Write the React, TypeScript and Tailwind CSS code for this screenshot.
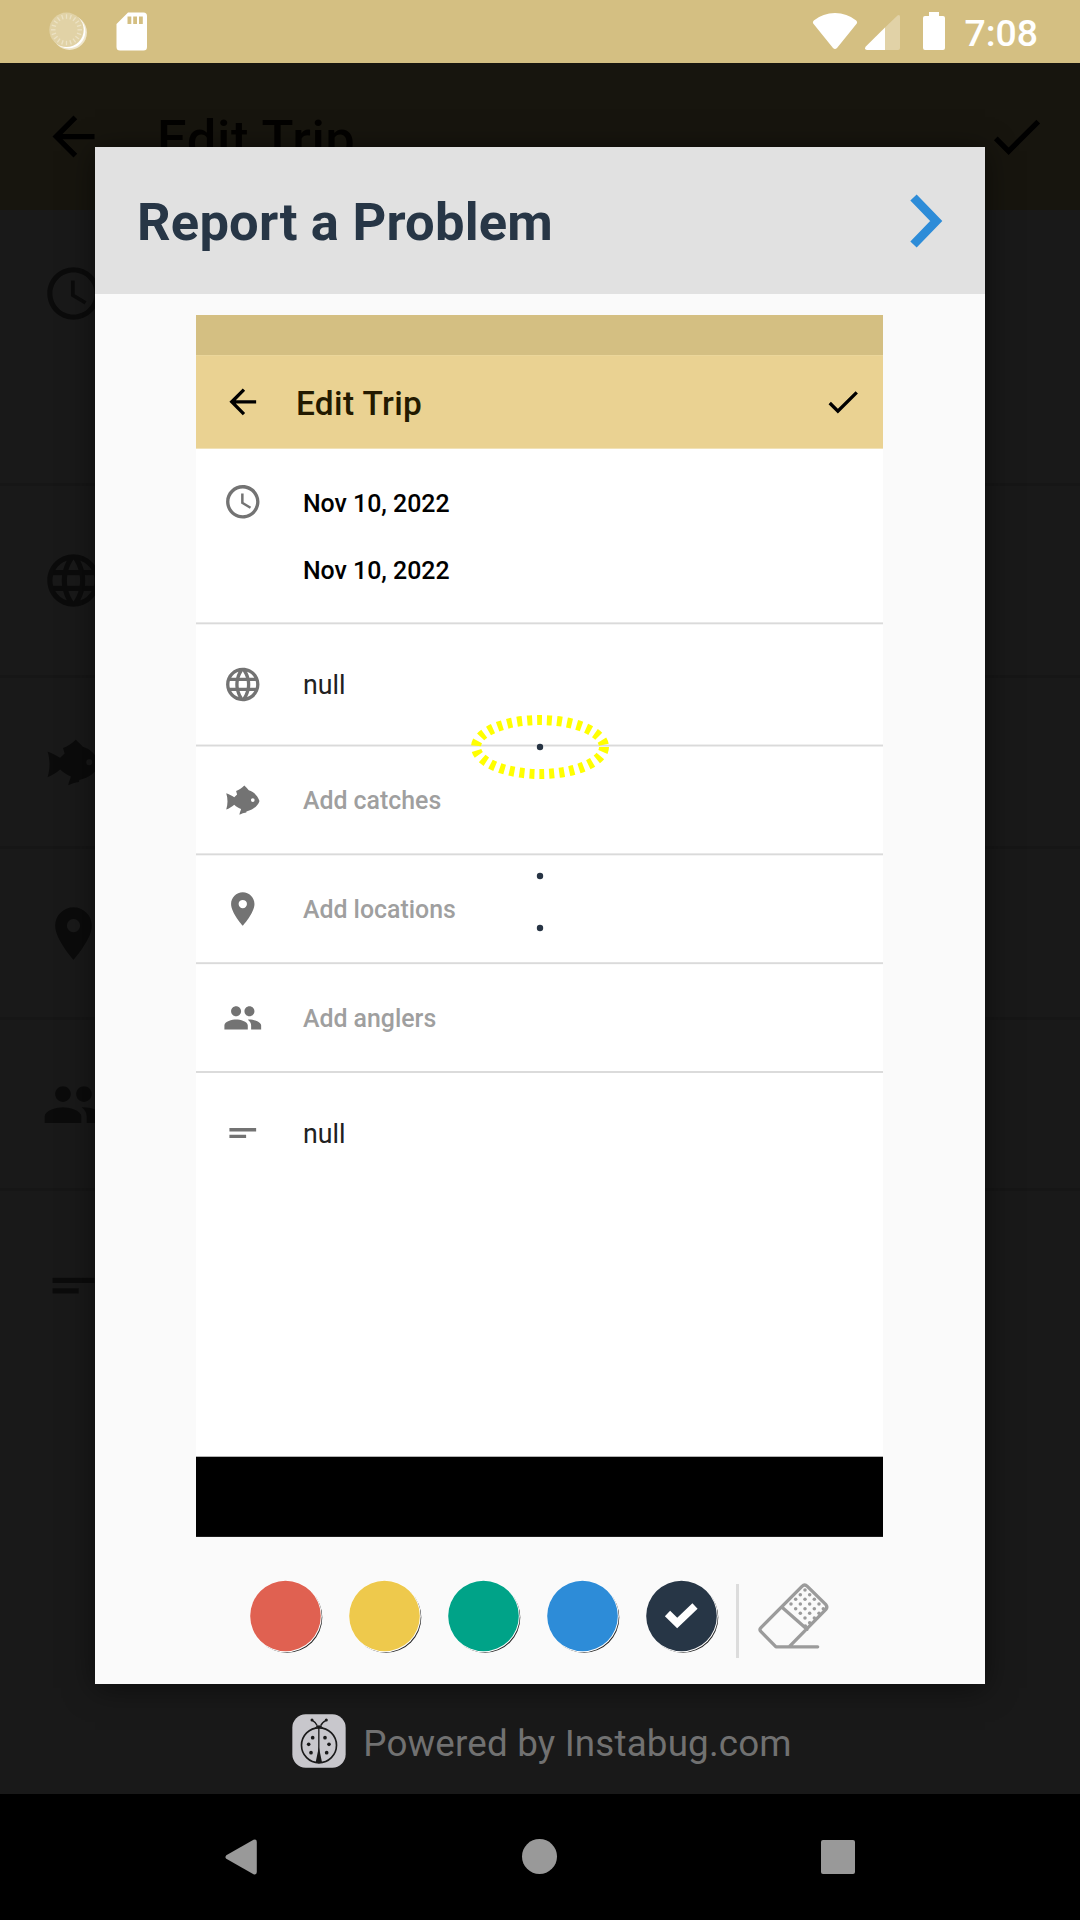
import type { ReactNode } from "react";
import {
  MdAccessTime,
  MdArrowBack,
  MdCheck,
  MdLanguage,
  MdLocationOn,
  MdPeople,
  MdShortText,
} from "react-icons/md";

function FishIcon() {
  return (
    <svg viewBox="0 0 24 24" className="size-[63px]" fill="currentColor">
      <path
        fillRule="evenodd"
        d="M2.1 7.8C3.6 8.3 5.4 9.2 6.9 10.2L8.6 8.6L8 6.5C9.8 5.7 11.5 4.7 12.9 3.2C13.8 4.2 14.8 5 15.6 6C18.4 6.8 20.9 9.2 22 12.5C20.9 15.8 18 17.8 14.2 18.7L14.1 19.4C12.7 19.6 11.3 20 10 20.7C10.1 19.5 10.7 18.4 11 17.3C9.5 16.8 8.2 15.9 6.9 14.7C5.4 16 3.8 17 2.1 17.6C3.1 14.4 3.1 11 2.1 7.8ZM18 10.8A1.1 1.1 0 1 0 18 13A1.1 1.1 0 1 0 18 10.8Z"
      />
    </svg>
  );
}

interface RowProps {
  icon: ReactNode;
  height: string;
  last?: boolean;
  children?: ReactNode;
}

function Row({ icon, height, last, children }: RowProps) {
  return (
    <div className={`flex items-center pl-[42px] ${height} ${last ? "" : "border-b-[3px] border-[#dadada]"}`}>
      <span className="text-[#737373]">{icon}</span>
      <span className="ml-[63px] pt-[3px] whitespace-nowrap">{children}</span>
    </div>
  );
}

function TripScreen({ labels }: { labels: boolean }) {
  return (
    <div className="flex h-[1920px] w-[1080px] flex-col bg-white text-[42px] leading-[48px]">
      <div className="h-[63px] bg-[#d4bf82]" />
      <div className="flex h-[147px] items-center bg-[#ead292] pr-[32px] pl-[42px] text-black">
        <MdArrowBack className="size-[63px]" />
        <span className="ml-[52px] flex-1 pt-[5px] text-[52.5px] leading-[62px] font-medium tracking-[0.6px] text-[#231a00]">
          Edit Trip
        </span>
        <MdCheck className="size-[63px]" />
      </div>
      <div className="flex h-[276px] border-b-[3px] border-[#dadada] pt-[52px] pl-[42px]">
        <MdAccessTime className="size-[63px] text-[#737373]" />
        {labels && (
          <div className="ml-[63px] flex flex-col gap-[57px] pt-[11px] text-[39.1px] font-medium text-black">
            <span>Nov 10, 2022</span>
            <span>Nov 10, 2022</span>
          </div>
        )}
      </div>
      <Row icon={<MdLanguage className="size-[63px]" />} height="h-[192px]">
        {labels && <span className="text-[#212121]">null</span>}
      </Row>
      <Row icon={<FishIcon />} height="h-[171px]">
        {labels && <span className="text-[39.1px] font-medium text-[#9f9f9f]">Add catches</span>}
      </Row>
      <Row icon={<MdLocationOn className="size-[63px]" />} height="h-[171px]">
        {labels && <span className="text-[39.1px] font-medium text-[#9f9f9f]">Add locations</span>}
      </Row>
      <Row icon={<MdPeople className="size-[63px]" />} height="h-[171px]">
        {labels && <span className="text-[39.1px] font-medium text-[#9f9f9f]">Add anglers</span>}
      </Row>
      <Row icon={<MdShortText className="size-[63px]" />} height="h-[189px]" last>
        {labels && <span className="text-[#212121]">null</span>}
      </Row>
      <div className="flex-1" />
      <div className="h-[126px] bg-black" />
    </div>
  );
}

const TICKS = Array.from({ length: 20 }, (_, i) => i * 18);

function StatusBar() {
  return (
    <div className="flex h-[63px] items-start bg-[#d4bf82] text-white">
      <svg className="mt-[10px] ml-[46px] h-[44px] w-[44px]" viewBox="46 10 44 44">
        <circle cx="69.500" cy="32.500" r="17.400" fill="#efe6cc" />
        <circle cx="68.500" cy="31.500" r="16.800" fill="#fff" />
        <circle cx="66.500" cy="29.800" r="17.200" fill="#e1d2a6" />
        {TICKS.map((a) => (
          <path key={a} d="M66.5 14.3V18.8" stroke="#ece2c4" strokeWidth="1.3" transform={`rotate(${a} 66.5 29.8)`} />
        ))}
      </svg>
      <svg className="mt-[12px] ml-[26px] h-[39px] w-[32px]" viewBox="116 12 32 39">
        <path
          fillRule="evenodd"
          fill="currentColor"
          d="M128 12.5H143.5Q147 12.5 147 16V47Q147 50.5 143.5 50.5H120Q116.5 50.5 116.5 47V24ZM127.5 16.5V24H131.3V16.5ZM133.2 16.5V24H137V16.5ZM139 16.5V24H142.8V16.5Z"
        />
      </svg>
      <div className="flex-1" />
      <svg className="mt-[12px] h-[40px] w-[46px]" viewBox="812 12 46 40" fill="currentColor">
        <path d="M813.2 23.5Q812.2 21.8 813.8 20.5Q823 13 835 13T856.2 20.5Q857.8 21.8 856.8 23.5L837 48Q835 50 833 48Z" />
      </svg>
      <svg className="mt-[12px] ml-[6px] h-[40px] w-[38px]" viewBox="864 12 38 40" fill="currentColor">
        <path d="M885 27.5L897.5 15.5Q900 14 900 17V48Q900 50 898 50H885Z" opacity=".3" />
        <path d="M885 27.5V50H867Q863.800 49.500 865.800 46.500Z" />
      </svg>
      <svg className="mt-[12px] ml-[21px] h-[38px] w-[22px]" viewBox="0 0 22 38" fill="currentColor">
        <path d="M6 0H16V4H20Q22 4 22 6V36Q22 38 20 38H2Q0 38 0 36V6Q0 4 2 4H6Z" />
      </svg>
      <span className="mt-[11px] mr-[42px] ml-[19px] text-[37.4px] leading-[44px] font-medium">7:08</span>
    </div>
  );
}

function Swatch({ fill, selected }: { fill: string; selected?: boolean }) {
  return (
    <svg className="mr-[24px] h-[75px] w-[75px]" viewBox="-36.500 -36 75 75">
      <circle cx="1.500" cy="1.500" r="35.300" fill="#222" />
      <circle cx="0.300" cy="0.300" r="36" fill="#fff" />
      <circle r="35.300" fill={fill} />
      {selected && (
        <path d="M-14 -2.500L-4.300 7L13.500 -10" fill="none" stroke="#fff" strokeWidth="7.500" strokeLinejoin="miter" />
      )}
    </svg>
  );
}

const ERASER_DOTS = [
  [825, 88], [811, 102], [839, 102], [797, 116], [825, 116], [853, 116], [783, 130],
  [811, 130], [839, 130], [867, 130], [797, 144], [825, 144], [853, 144], [880, 144],
  [811, 158], [839, 158], [867, 158], [825, 172], [853, 172], [839, 186], [826, 196],
];

function EraserIcon() {
  return (
    <svg className="h-[68px] w-[74px]" viewBox="681 64 222 204" fill="none" stroke="#9b9b9b" strokeWidth="10">
      <path
        strokeLinejoin="round"
        strokeLinecap="round"
        d="M863 258.500H738L693 213Q687 207 693 201L816 77Q824 69 832 77L887 131Q894 139 887 147L778 258M756 140L831 206"
      />
      {ERASER_DOTS.map(([x, y]) => (
        <circle key={`${x}-${y}`} cx={x} cy={y} r="5.300" fill="#9b9b9b" stroke="none" />
      ))}
    </svg>
  );
}

function Annotations() {
  return (
    <svg className="absolute top-[390px] left-[264px] h-[240px] w-[160px]" viewBox="460 705 160 240">
      <ellipse cx="540" cy="747" rx="64" ry="27" fill="none" stroke="#ffff00" strokeWidth="10" strokeDasharray="5 5" />
      <circle cx="540" cy="747" r="3.200" fill="#273444" />
      <circle cx="540" cy="876" r="3.200" fill="#273444" />
      <circle cx="540" cy="928" r="3.200" fill="#273444" />
    </svg>
  );
}

function LadybugLogo() {
  return (
    <svg className="h-[54px] w-[54px]" viewBox="188 461 162 162">
      <rect x="189" y="462" width="160" height="160" rx="40" fill="#c8c7cc" />
      <g fill="none" stroke="#1a1a1a" strokeWidth="4">
        <circle cx="269" cy="555" r="52.500" strokeWidth="5" />
        <path d="M268.500 500V580" />
        <path d="M264 496Q261 487 249 480M274 496Q277 487 290 480" />
      </g>
      <g fill="#1a1a1a">
        <path d="M256 504Q261 495 269 495T282 504Q269 498 256 504ZM268.500 560L278 606Q268 611 259 606Z" />
        <circle cx="248" cy="479" r="4.500" />
        <circle cx="291" cy="479" r="4.500" />
        <circle cx="250" cy="532" r="5.500" />
        <circle cx="287" cy="532" r="5.500" />
        <circle cx="238" cy="552" r="5.500" />
        <circle cx="299" cy="552" r="5.500" />
        <circle cx="245" cy="577" r="5.500" />
        <circle cx="292" cy="577" r="5.500" />
      </g>
    </svg>
  );
}

function ReportDialog() {
  return (
    <div className="flex h-[1537px] w-[890px] flex-col bg-[#fafafa] shadow-[0_4px_28px_rgba(0,0,0,0.5)]">
      <div className="flex h-[147px] items-center justify-between bg-[#e1e1e1] pr-[40px] pl-[42px]">
        <h1 className="pt-[3px] text-[52.5px] leading-[62px] font-bold tracking-[0.2px] text-[#273646]">
          Report a Problem
        </h1>
        <svg className="h-[56px] w-[36px]" viewBox="909 192.500 36 56">
          <path d="M913.500 197L936.200 220.500L913.500 244" fill="none" stroke="#2d8cd8" strokeWidth="8.800" />
        </svg>
      </div>
      <div className="relative mt-[21px] ml-[101px] h-[1222px] w-[687px]">
        <div className="h-[1222px] w-[687px] overflow-hidden">
          <div className="origin-top-left scale-[0.6364]">
            <TripScreen labels />
          </div>
        </div>
        <Annotations />
      </div>
      <div className="flex h-[147px] items-start pt-[43px] pl-[154px]">
        <Swatch fill="#e06151" />
        <Swatch fill="#eec94c" />
        <Swatch fill="#00a388" />
        <Swatch fill="#2d8cd8" />
        <Swatch fill="#273646" selected />
        <div className="mt-[4px] -ml-[8px] h-[74px] w-[3px] bg-[#dcdcdc]" />
        <div className="mt-[2px] ml-[18px]">
          <EraserIcon />
        </div>
      </div>
    </div>
  );
}

function NavigationBar() {
  return (
    <div className="flex h-[126px] items-center justify-between bg-black pr-[225px] pl-[225px]">
      <svg className="h-[36px] w-[32px]" viewBox="0 0 32 36">
        <path d="M1.300 16.200L28.500 0.800Q31.800 -0.300 31.800 3V33Q31.800 36.300 28.500 35.200L1.300 19.800Q-0.400 18 1.300 16.200Z" fill="#999" />
      </svg>
      <div className="-mr-[1px] mb-[1px] size-[35px] rounded-full bg-[#999]" />
      <div className="size-[34px] rounded-[2px] bg-[#999]" />
    </div>
  );
}

export default function App() {
  return (
    <div className="relative h-[1920px] w-[1080px] overflow-hidden font-[Roboto,sans-serif]">
      <TripScreen labels={false} />
      <div className="absolute inset-0 flex flex-col">
        <StatusBar />
        <div className="flex flex-1 flex-col items-center bg-black/90 pt-[84px]">
          <ReportDialog />
          <div className="mt-[30px] flex items-center pl-[4px] text-[36.75px] leading-[44px] tracking-[0.18px] text-[#717171]">
            <LadybugLogo />
            <span className="ml-[17px] pt-[5px]">Powered by Instabug.com</span>
          </div>
        </div>
        <NavigationBar />
      </div>
    </div>
  );
}
